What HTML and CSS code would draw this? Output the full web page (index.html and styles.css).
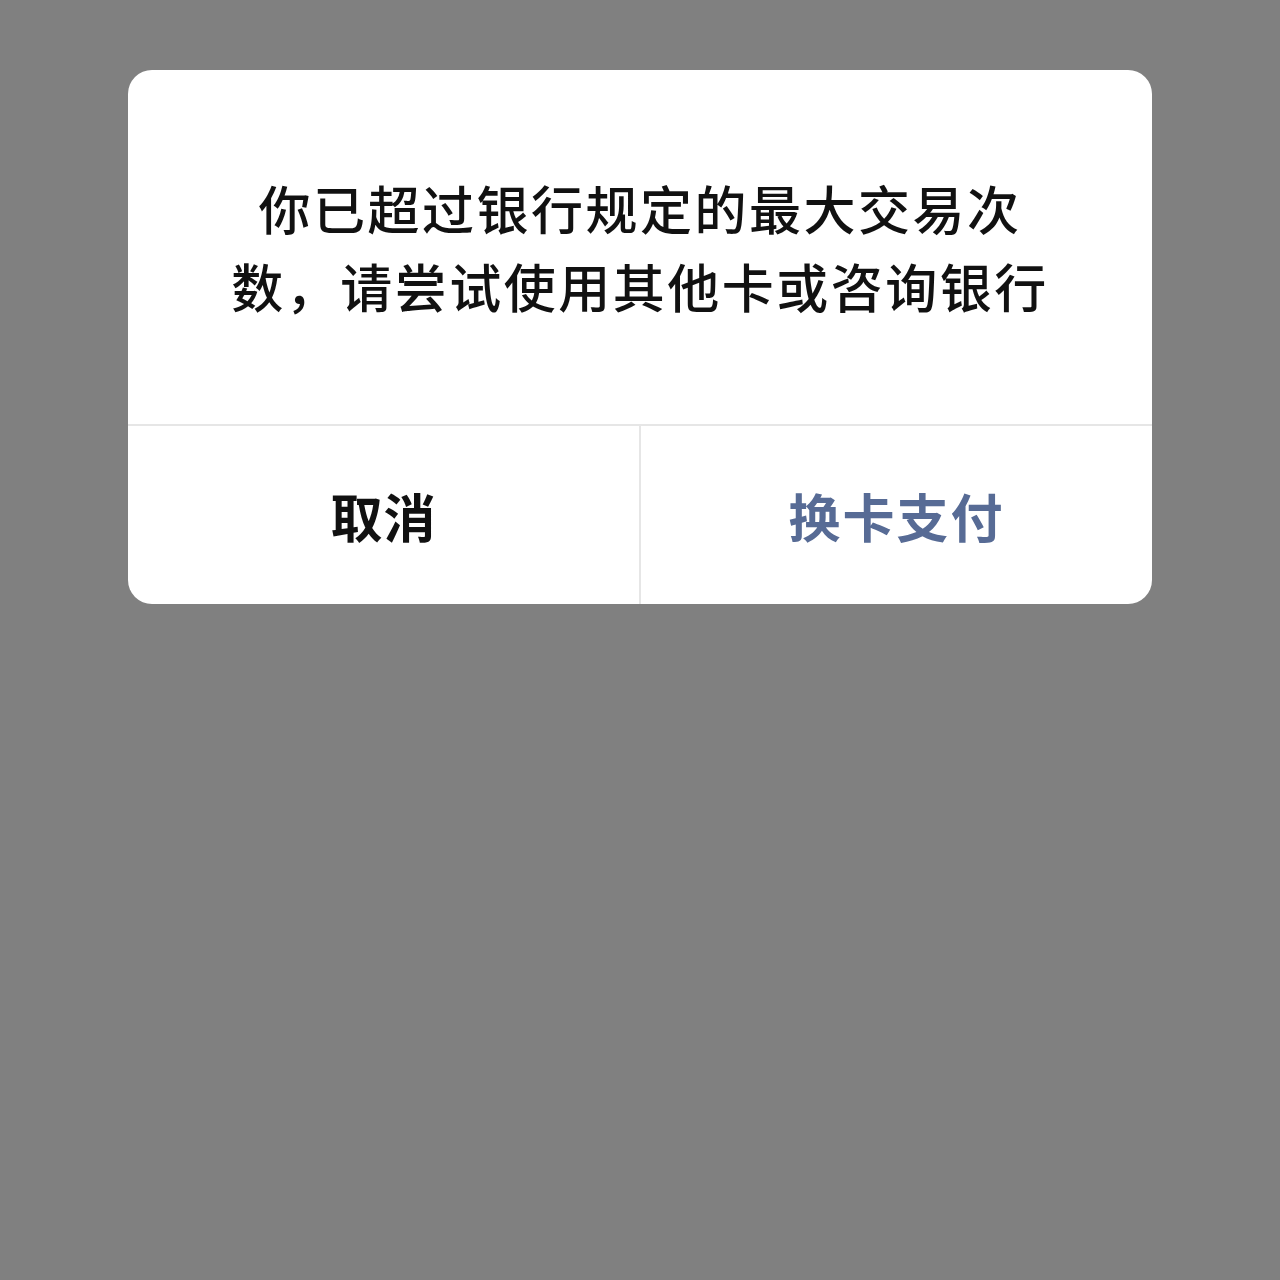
FILE: index.html
```html
<!DOCTYPE html>
<html lang="zh-CN">
<head>
    <meta charset="UTF-8">
    <meta name="viewport" content="width=device-width, initial-scale=1.0">
    <title>支付提示</title>
    <link rel="stylesheet" href="styles.css">
</head>
<body>
    <div class="mask">
        <div class="dialog">
            <p class="message">你已超过银行规定的最大交易次<br>数，请尝试使用其他卡或咨询银行</p>
            <div class="actions">
                <button class="btn cancel">取消</button>
                <button class="btn primary">换卡支付</button>
            </div>
        </div>
    </div>
</body>
</html>
```

FILE: styles.css
```css
/* Alert dialog over a dimmed page */
body {
    margin: 0;
    background: hsl(0, 0%, 50%);
    font-family: "Noto Sans CJK SC", "Noto Sans", sans-serif;
}

.mask {
    display: flex;
    justify-content: center;
    padding-top: 70px;
    height: 1210px;
}

.dialog {
    width: 1024px;
    height: 534px;
    background: #fff;
    border-radius: 24px;
    overflow: hidden;
    display: flex;
    flex-direction: column;
}

.message {
    margin: 0;
    flex: 1;
    display: flex;
    align-items: center;
    justify-content: center;
    padding: 0 40px;
    text-align: center;
    font-size: 52px;
    font-weight: 500;
    line-height: 78px;
    letter-spacing: 2.5px;
    color: #111;
    text-spacing-trim: space-all;
}

.actions {
    display: flex;
    height: 178px;
    border-top: 2px solid #e6e6e6;
}

.btn {
    flex: 1;
    border: none;
    background: transparent;
    font-family: inherit;
    font-size: 52px;
    font-weight: 700;
    letter-spacing: 1px;
    color: #111;
    padding: 0;
    cursor: pointer;
}

.btn + .btn {
    border-left: 2px solid #e6e6e6;
}

.btn.primary {
    color: #576b95;
    letter-spacing: 2px;
}
```
